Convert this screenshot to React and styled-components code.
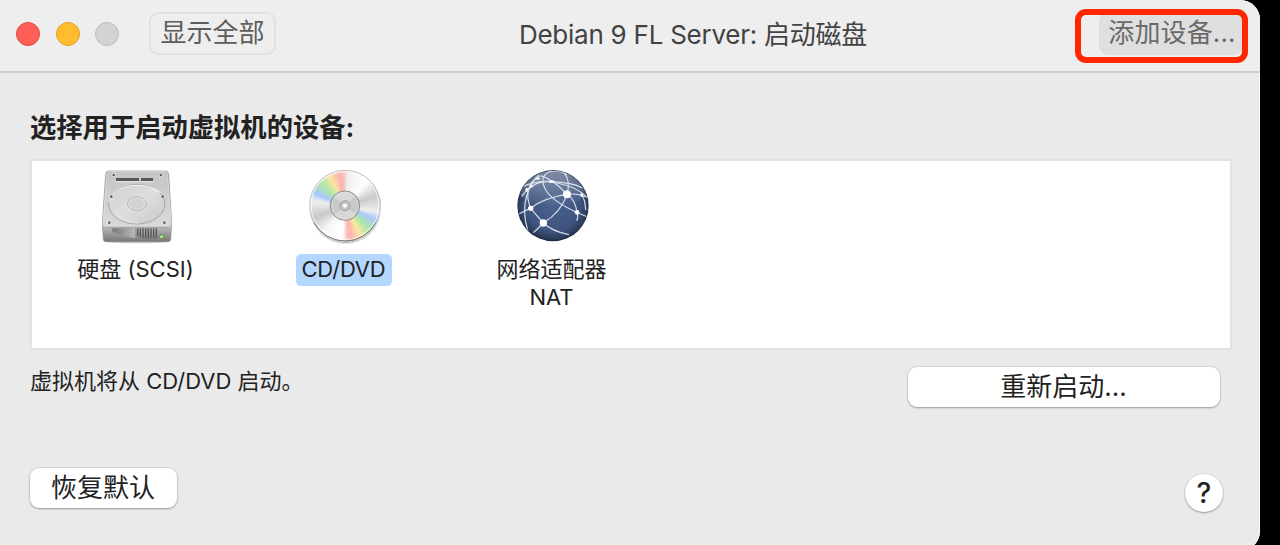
import React from 'react';
import styled, { createGlobalStyle } from 'styled-components';

const devices = [
	{ id: 'disk', lines: ['硬盘 (SCSI)'], Icon: HardDiskIcon },
	{ id: 'cd', lines: ['CD/DVD'], Icon: DiscIcon },
	{ id: 'network', lines: ['网络适配器', 'NAT'], Icon: NetworkIcon },
];

export default function App() {
	return (
		<>
			<GlobalStyle />
			<Window>
				<TitleBar>
					<Lights>
						<Light $color="#ff5f57" $edge="#e2463f" />
						<Light $color="#febc2e" $edge="#e0a028" />
						<Light $color="#d3d3d3" $edge="#bcbcbc" />
					</Lights>
					<ShowAll>显示全部</ShowAll>
					<Title>Debian 9 FL Server: 启动磁盘</Title>
					<AddDevice>
						添加设备...
						<Marker />
					</AddDevice>
				</TitleBar>
				<Content>
					<Heading>选择用于启动虚拟机的设备:</Heading>
					<DeviceList>
						{devices.map(({ id, lines, Icon }) => (
							<Device key={id}>
								<Icon />
								<Label $selected={id === 'cd'}>
									{lines.map((line) => (
										<span key={line}>{line}</span>
									))}
								</Label>
							</Device>
						))}
					</DeviceList>
					<StatusRow>
						<Status>虚拟机将从 CD/DVD 启动。</Status>
						<PushButton $width={312}>重新启动...</PushButton>
					</StatusRow>
					<Footer>
						<PushButton $width={147}>恢复默认</PushButton>
						<HelpButton>?</HelpButton>
					</Footer>
				</Content>
			</Window>
		</>
	);
}

function HardDiskIcon() {
	return (
		<Picture viewBox="27 24 228 228">
			<defs>
				<linearGradient id="hdTop" x1="0" y1="0" x2="0" y2="1">
					<stop offset="0" stopColor="#c4c4c4" />
					<stop offset="1" stopColor="#d9d9d9" />
				</linearGradient>
				<linearGradient id="hdFront" x1="0" y1="0" x2="0" y2="1">
					<stop offset="0" stopColor="#a2a2a2" />
					<stop offset="0.75" stopColor="#c6c6c6" />
					<stop offset="1" stopColor="#777" />
				</linearGradient>
				<linearGradient id="hdPlatter" x1="0" y1="0" x2="1" y2="1">
					<stop offset="0" stopColor="#d0d0d0" />
					<stop offset="0.5" stopColor="#dedede" />
					<stop offset="1" stopColor="#c8c8c8" />
				</linearGradient>
				<linearGradient id="hdShade">
					<stop offset="0" stopColor="#777" />
					<stop offset="1" stopColor="#bbb" />
				</linearGradient>
			</defs>
			<ellipse cx="141" cy="244" rx="101" ry="6" fill="#000" opacity="0.18" />
			<path d="M54 33H228Q235 34 236 43L245 188L242 237Q242 245 233 245H49Q40 245 40 237L37 188L47 43Q48 34 54 33Z" fill="url(#hdFront)" stroke="#8b8b8b" strokeWidth="2" />
			<path d="M57 34H225Q232 35 233 43L243 190Q243 199 235 199H47Q39 199 39 190L50 43Q51 35 57 34Z" fill="url(#hdTop)" stroke="#e6e6e6" strokeWidth="2" />
			<path d="M78 54H147V64H78ZM153 54H189V64H153Z" fill="#555" />
			<path d="M78 65H147M153 65H189" stroke="#eee" strokeWidth="3" />
			<ellipse cx="140" cy="133" rx="84" ry="59" fill="url(#hdPlatter)" stroke="#a6a6a6" strokeWidth="3" />
			<path d="M57 125C67 91 99 76 140 76C178 76 202 89 211 99L186 87" fill="none" stroke="#f4f4f4" strokeWidth="3" />
			<path d="M76 160Q107 188 146 190" fill="none" stroke="#f2f2f2" strokeWidth="2" />
			<ellipse cx="141" cy="131" rx="26" ry="18" fill="#d2d2d2" stroke="#f4f4f4" strokeWidth="3" />
			<ellipse cx="141" cy="131" rx="28" ry="20" fill="none" stroke="#999" strokeWidth="2" />
			{[[71, 45], [213, 45], [64, 110], [218, 110], [58, 188], [223, 188]].map(([x, y]) => (
				<g key={`${x}-${y}`}>
					<circle cx={x} cy={y} r="6" fill="#eee" />
					<circle cx={x} cy={y} r="4" fill="#606060" />
				</g>
			))}
			<path d="M67 205H137V235Q89 229 67 213Z" fill="url(#hdShade)" />
			<path d="M67 205V239M137 205V237" stroke="#888" strokeWidth="2" />
			<path d="M143 205V227M151 205V231M159 205V234M167 205V235M175 205V235M183 205V235M191 205V235M199 205V235" stroke="#555" strokeWidth="4" />
			<path d="M47 202H235" stroke="#999" strokeWidth="2" />
			<circle cx="215" cy="230" r="7" fill="#777" />
			<circle cx="215" cy="230" r="5" fill="#9cf45f" />
		</Picture>
	);
}

function DiscIcon() {
	return (
		<Disc>
			<DiscSurface />
			<DiscOverlay viewBox="21 24 228 228">
				<defs>
					<radialGradient id="hub">
						<stop offset="0.2" stopColor="#eee" />
						<stop offset="1" stopColor="#b8b8b8" />
					</radialGradient>
				</defs>
				<circle cx="135" cy="137" r="106" fill="none" stroke="#bcbcbc" strokeWidth="3" />
				<path d="M42 188A106 106 0 0 0 228 188" fill="none" stroke="#777" strokeWidth="3" />
				<circle cx="135" cy="137" r="102" fill="none" stroke="#fff" strokeWidth="3" opacity="0.75" />
				<circle cx="135" cy="137" r="44" fill="#c9c9c9" stroke="#858585" strokeWidth="3" />
				<path d="M135 137L102 110A43 43 0 0 1 166 108ZM135 137L168 164A43 43 0 0 1 104 166Z" fill="#dedede" opacity="0.7" />
				<circle cx="135" cy="137" r="40" fill="none" stroke="#e2e2e2" strokeWidth="2" />
				<circle cx="135" cy="137" r="15" fill="url(#hub)" stroke="#8c8c8c" strokeWidth="2" />
				<circle cx="135" cy="137" r="8" fill="#fff" stroke="#999" strokeWidth="2" />
			</DiscOverlay>
		</Disc>
	);
}

function NetworkIcon() {
	return (
		<Picture viewBox="22 24 228 228">
			<defs>
				<radialGradient id="globe" cx="0.5" cy="0.48" r="0.54">
					<stop offset="0" stopColor="#4a6290" />
					<stop offset="0.7" stopColor="#3f547e" />
					<stop offset="0.9" stopColor="#2c3b5a" />
					<stop offset="1" stopColor="#141c2c" />
				</radialGradient>
				<linearGradient id="globeShine" x1="0" y1="0" x2="0" y2="1">
					<stop offset="0" stopColor="#fff" stopOpacity="0.38" />
					<stop offset="1" stopColor="#fff" stopOpacity="0" />
				</linearGradient>
				<clipPath id="globeClip">
					<circle cx="136" cy="137" r="105" />
				</clipPath>
			</defs>
			<circle cx="136" cy="137" r="107" fill="url(#globe)" />
			<g clipPath="url(#globeClip)">
				<ellipse cx="136" cy="84" rx="104" ry="56" fill="url(#globeShine)" />
				<g fill="none" stroke="#d7dfeb" strokeWidth="3.5">
					<path d="M42 109Q84 51 147 69Q207 80 238 112" />
					<path d="M42 82Q83 61 132 65Q195 67 224 84" />
					<path d="M69 145Q104 115 178 103Q210 99 238 112" />
					<path d="M35 161Q55 150 69 145L107 189Q133 214 184 224" />
					<path d="M69 145Q43 84 94 46" />
					<path d="M66 228Q33 139 72 73Q79 58 97 48" />
					<path d="M107 189Q161 155 178 103Q189 64 171 40" />
					<path d="M107 189Q91 206 77 218" />
					<path d="M178 103Q139 60 99 47M178 103Q203 119 208 157Q213 170 207 182" />
					<path d="M240 171Q142 132 116 93Q92 51 124 36Q154 27 177 45" />
					<path d="M222 104Q233 120 234 150" />
				</g>
				<g fill="#fff">
					<circle cx="178" cy="103" r="12" />
					<circle cx="107" cy="189" r="11" />
					<circle cx="69" cy="145" r="8" />
					<circle cx="208" cy="157" r="7" />
					<ellipse cx="132" cy="65" rx="8" ry="4" />
					<ellipse cx="57" cy="89" rx="4" ry="6" />
					<ellipse cx="222" cy="105" rx="4" ry="6" />
					<ellipse cx="91" cy="56" rx="7" ry="3" />
					<circle cx="71" cy="79" r="4" />
				</g>
			</g>
		</Picture>
	);
}

// Styles

const GlobalStyle = createGlobalStyle`
	* {
		box-sizing: border-box;
	}

	body {
		margin: 0;
		background: #000;
		font-family: Inter, 'Noto Sans CJK SC', sans-serif;
		color: #222;
		overflow: hidden;
	}

	button {
		font-family: inherit;
		padding: 0;
	}
`;

const Window = styled.div`
	width: 1260px;
	height: 551px;
	background: #eaeaea;
	border-radius: 0 20px 20px 0;
	box-shadow: inset -1px 0 #f8f8f8;
	overflow: hidden;
`;

const TitleBar = styled.header`
	height: 73px;
	display: flex;
	padding: 12px 17px 0 16px;
	background: #eee;
	border-bottom: 2px solid #cfcfcf;
`;

const Lights = styled.div`
	display: flex;
	gap: 15.5px;
	padding-top: 10px;
	width: 133px;
`;

const Light = styled.span`
	width: 24px;
	height: 24px;
	border-radius: 50%;
	background: ${({ $color }) => $color};
	border: 1px solid ${({ $edge }) => $edge};
`;

const ShowAll = styled.button`
	width: 127px;
	height: 43px;
	border: 2px solid #e1e1e1;
	border-radius: 9px;
	background: #eee;
	color: #5c5c5c;
	font-size: 26px;
	line-height: 36px;
	padding-bottom: 1px;
`;

const Title = styled.h1`
	flex: 1;
	margin: 0;
	padding-left: 11px;
	text-align: center;
	font-size: 26px;
	font-weight: 400;
	letter-spacing: -0.25px;
	line-height: 46px;
	color: #424242;
	white-space: nowrap;
`;

const AddDevice = styled.button`
	position: relative;
	width: 144px;
	height: 43px;
	border: 0;
	border-radius: 9px;
	background: #dfdfdf;
	color: #6a6a6a;
	font-size: 26px;
	letter-spacing: 0.15px;
	line-height: 36px;
	padding: 0 0 1px 2px;
	white-space: nowrap;
`;

const Marker = styled.span`
	position: absolute;
	top: -3px;
	left: -24px;
	width: 173px;
	height: 54px;
	border: 6px solid #ff2600;
	border-radius: 11px;
`;

const Content = styled.main`
	padding: 36px 28px 0 30px;
`;

const Heading = styled.h2`
	margin: 0;
	height: 50px;
	font-size: 26.3px;
	font-weight: 700;
	line-height: 37px;
`;

const DeviceList = styled.div`
	display: flex;
	height: 191px;
	padding-top: 7px;
	background: #fff;
	border: 2px solid #e2e2e2;
`;

const Device = styled.div`
	width: 208px;
	display: flex;
	flex-direction: column;
	align-items: center;
`;

const Picture = styled.svg`
	width: 76px;
	height: 76px;
	margin-left: 2px;
`;

const Disc = styled.div`
	display: grid;
	place-items: center;
	width: 76px;
	height: 76px;
	margin-left: 2px;
`;

const DiscSurface = styled.span`
	grid-area: 1 / 1;
	width: 71px;
	height: 71px;
	border-radius: 50%;
	box-shadow: 0 2px 2px -1px rgba(0, 0, 0, 0.4);
	background: conic-gradient(
		from -80deg,
		#eee 0deg,
		#a8c8fb 13deg,
		#aee3ad 31deg,
		#bce9aa 39deg,
		#fbe7a0 52deg,
		#fbb4b1 69deg,
		#fbbcb9 76deg,
		#efefef 84deg,
		#fff 120deg,
		#c9c9c9 150deg,
		#eee 180deg,
		#a8c8fb 193deg,
		#aee3ad 211deg,
		#bce9aa 219deg,
		#fbe7a0 232deg,
		#fbb4b1 249deg,
		#fbbcb9 256deg,
		#fff 266deg,
		#f8f8f8 300deg,
		#c8c8c8 330deg,
		#eee 360deg
	);
`;

const DiscOverlay = styled.svg`
	grid-area: 1 / 1;
	width: 76px;
	height: 76px;
`;

const Label = styled.div`
	display: flex;
	flex-direction: column;
	align-items: center;
	margin-top: 10px;
	margin-right: 1px;
	padding: 2px 6px;
	border-radius: 5px;
	background: ${({ $selected }) => ($selected ? '#b3d7ff' : 'transparent')};
	font-size: 22px;
	letter-spacing: ${({ $selected }) => ($selected ? '-0.2px' : '0')};
	line-height: 27.5px;
	white-space: nowrap;
`;

const StatusRow = styled.div`
	display: flex;
	justify-content: space-between;
	padding: 17px 12px 0 0;
`;

const Status = styled.p`
	margin: 0;
	font-size: 22px;
	line-height: 28px;
`;

const PushButton = styled.button`
	width: ${({ $width }) => $width}px;
	height: 40px;
	border: 0;
	border-radius: 9px;
	background: #fff;
	box-shadow: 0 0 1px 1px rgba(0, 0, 0, 0.07), 0 1px 2px rgba(0, 0, 0, 0.3);
	color: #222;
	font-size: 26px;
	line-height: 36px;
	padding: 0 1px 1px 0;
`;

const Footer = styled.footer`
	display: flex;
	justify-content: space-between;
	padding: 61px 9px 0 0;
`;

const HelpButton = styled.button`
	width: 38px;
	height: 38px;
	margin-top: 6px;
	border: 0;
	border-radius: 50%;
	background: #fff;
	box-shadow: 0 0 1px 1px rgba(0, 0, 0, 0.06), 0 1px 2px rgba(0, 0, 0, 0.3);
	color: #222;
	font-size: 28px;
	font-weight: 500;
	line-height: 38px;
`;
